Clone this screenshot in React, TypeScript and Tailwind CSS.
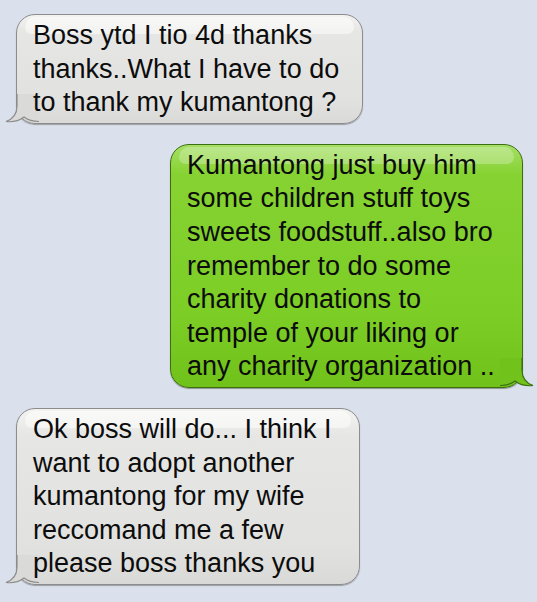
import React from 'react';

type Side = 'left' | 'right';

const Tail: React.FC<{ side: Side; fill: string; stroke: string }> = ({ side, fill, stroke }) => {
  const outline = 'M12 0 L12 12 C12 20 8 25 1 27.5 C9 28.5 15 26 19 23 C23 26 27 27.5 34 27.5';
  return (
    <svg
      width="36"
      height="30"
      viewBox="0 0 36 30"
      className={
        side === 'left'
          ? 'absolute left-[-12px] bottom-[-1.5px]'
          : 'absolute right-[-12px] bottom-[-1.5px] -scale-x-100'
      }
    >
      <path d={outline + ' L34 0 Z'} fill={fill} />
      <path d={outline} fill="none" stroke={stroke} strokeWidth="1.2" />
    </svg>
  );
};

const Bubble: React.FC<{ side: Side; width: string; lines: string[] }> = ({ side, width, lines }) => {
  const green = side === 'right';
  return (
    <div
      className={
        'relative rounded-[19px] border pt-[4px] pb-[3px] pl-[16px] ' +
        width +
        (green
          ? ' self-end mr-[14px] border-[#3d6f12] bg-[linear-gradient(to_bottom,#a6e066,#86d232_12%,#7cce26_70%,#70c11a)] shadow-[0_1px_1px_rgba(40,60,20,0.45)]'
          : ' ml-[16px] border-[#8c8c8c] bg-[linear-gradient(to_bottom,#f3f3f1,#e6e6e4_15%,#e1e1df_80%,#d9d9d7)] shadow-[0_1px_1px_rgba(60,60,60,0.4)]')
      }
    >
      <div
        className={
          'absolute top-[2px] left-[8px] right-[8px] h-[17px] rounded-t-[15px] rounded-b-[10px] ' +
          (green ? 'bg-white/25' : 'bg-white/50')
        }
      />
      <Tail
        side={side}
        fill={green ? '#71c21b' : '#dadad8'}
        stroke={green ? '#3d6f12' : '#8c8c8c'}
      />
      <p className="relative font-['Liberation_Sans',Arial,sans-serif] text-[27px] leading-[33.6px] text-[#0c0c0c] whitespace-nowrap">
        {lines.map((l, i) => (
          <span key={i} className="block">{l}</span>
        ))}
      </p>
    </div>
  );
};

export default function App() {
  return (
    <div className="w-[537px] h-[602px] overflow-hidden bg-[#dbe1ec] flex flex-col gap-[20px] pt-[14px]">
      <Bubble
        side="left"
        width="w-[347px]"
        lines={['Boss ytd I tio 4d thanks', 'thanks..What I have to do', 'to thank my kumantong ?']}
      />
      <Bubble
        side="right"
        width="w-[353px]"
        lines={[
          'Kumantong just buy him',
          'some children stuff toys',
          'sweets foodstuff..also bro',
          'remember to do some',
          'charity donations to',
          'temple of your liking or',
          'any charity organization ..',
        ]}
      />
      <Bubble
        side="left"
        width="w-[344px]"
        lines={[
          'Ok boss will do... I think I',
          'want to adopt another',
          'kumantong for my wife',
          'reccomand me a few',
          'please boss thanks you',
        ]}
      />
    </div>
  );
}
